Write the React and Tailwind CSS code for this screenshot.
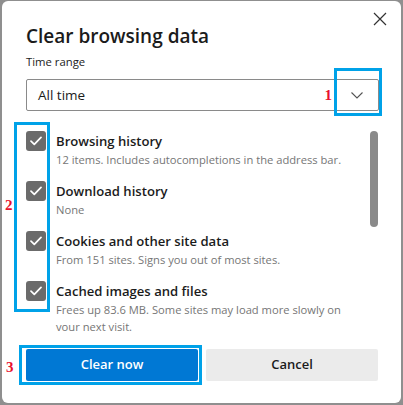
import React from "react";

const items = [
  { title: "Browsing history", sub: "12 items. Includes autocompletions in the address bar." },
  { title: "Download history", sub: "None" },
  { title: "Cookies and other site data", sub: "From 151 sites. Signs you out of most sites." },
  { title: "Cached images and files", sub: "Frees up 83.6 MB. Some sites may load more slowly on your next visit." },
];

const serif = { fontFamily: '"Liberation Serif", serif' };

function Check() {
  return (
    <div className="w-[20px] h-[20px] rounded-[3px] bg-[#6b6b6b] flex items-center justify-center shrink-0">
      <svg width="12" height="10" viewBox="0 0 12 10" fill="none">
        <path d="M1 5.2 L4.3 8.4 L11 1.4" stroke="white" strokeWidth="1.7" strokeLinecap="round" strokeLinejoin="round" />
      </svg>
    </div>
  );
}

export default function App() {
  return (
    <div
      className="w-[403px] h-[405px] bg-[#8f8f8f] pt-[1px] pl-[2px] pr-[2px] pb-[2px]"
      style={{ fontFamily: '"Open Sans", "Noto Sans", sans-serif' }}
    >
      <div className="relative w-full h-full bg-white rounded-[6px] overflow-hidden flex flex-col">
        {/* header */}
        <div className="flex justify-between pl-[24px] pr-[13px] pt-[10px]">
          <h1 className="mt-[12px] text-[19px] leading-[26px] font-semibold text-[#1b1b1b]">Clear browsing data</h1>
          <button className="w-[16px] h-[16px] flex items-center justify-center">
            <svg width="14" height="14" viewBox="0 0 14 14">
              <path d="M1 1 L13 13 M13 1 L1 13" stroke="#333" strokeWidth="1.2" />
            </svg>
          </button>
        </div>

        <div className="pl-[24px] pr-[22px]">
          <div className="mt-[5px] text-[11.3px] leading-[16px] text-[#1b1b1b]">Time range</div>
          <div className="relative mt-[9px] h-[32px] border border-[#8a8a8a] rounded-[2px] flex items-center justify-between pl-[11px] pr-[15px]">
            <span className="text-[13.5px] text-[#1b1b1b]">All time</span>
            <div className="flex items-center gap-[19px]">
              <span className="text-[15px] font-bold text-[#e8112d]" style={serif}>1</span>
              <div className="relative">
                <svg width="12" height="7" viewBox="0 0 12 7" className="block">
                  <path d="M0.5 0.5 L6 6 L11.5 0.5" stroke="#555" strokeWidth="1.1" fill="none" />
                </svg>
                <div className="absolute left-[-17px] top-[-24px] w-[48px] h-[48px] border-[3px] border-[#00a2e8]" />
              </div>
            </div>
          </div>
        </div>

        {/* scroll area */}
        <div className="relative mt-[11px] h-[209px] overflow-hidden pl-[24px] pt-[9px]">
          <div className="flex flex-col">
            {items.map((it) => (
              <div key={it.title} className="h-[50px] flex gap-[10px]">
                <Check />
                <div className="w-[300px] pt-[1px]">
                  <div className="text-[13.1px] leading-[18px] font-semibold text-[#1b1b1b]">{it.title}</div>
                  <div className="mt-[1px] text-[11.2px] leading-[17px] text-[#767676]">{it.sub}</div>
                </div>
              </div>
            ))}
          </div>
          <div className="absolute left-[368px] top-[9px] w-[8px] h-[96px] rounded-full bg-[#8a8a8a]" />
          {/* highlight box 2 */}
          <div className="absolute left-[12px] top-0 w-[36px] h-[190px] border-[3px] border-[#00a2e8]" />
          <span className="absolute left-[3px] top-[72px] text-[15px] font-bold text-[#e8112d]" style={serif}>2</span>
        </div>

        {/* buttons */}
        <div className="mt-[18px] pl-[24px] pr-[23px] flex gap-[8px]">
          <div className="relative flex-1">
            <div className="absolute left-[-7px] top-[-4px] right-[-4px] bottom-[-4px] border-[3px] border-[#00a2e8]" />
            <button className="relative w-full h-[32px] rounded-[2px] bg-[#0078d4] text-white text-[13px] font-semibold">Clear now</button>
            <span className="absolute left-[-20px] top-[7px] text-[15px] font-bold text-[#e8112d]" style={serif}>3</span>
          </div>
          <button className="flex-1 h-[32px] rounded-[2px] bg-[#ebebeb] text-[#1b1b1b] text-[13px] font-semibold">Cancel</button>
        </div>
      </div>
    </div>
  );
}
